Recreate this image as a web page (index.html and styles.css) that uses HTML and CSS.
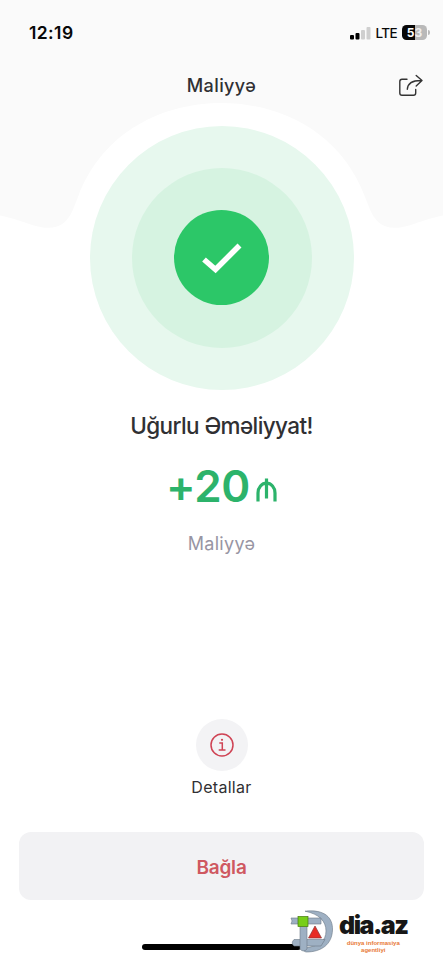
FILE: index.html
```html
<!DOCTYPE html>
<html lang="az">
<head>
<meta charset="utf-8">
<title>Maliyyə</title>
<link rel="stylesheet" href="styles.css">
</head>
<body>
<main class="screen">
  <svg class="backdrop" width="443" height="240" viewBox="0 0 443 240" aria-hidden="true">
    <path fill="#fafafa" d="M0 0H443V215.500C430 218 420 222 409 225.500C388 231.500 376 226 369 207L365 197C340 130 278 103 221.500 103S103 130 78 197L74 207C67 226 55 231.500 34 225.500C23 222 13 218 0 215.500Z"/>
  </svg>

  <div class="status">
    <span class="time">12:19</span>
    <div class="indicators">
      <svg class="signal" width="21" height="14" viewBox="0 0 21 14" aria-hidden="true">
        <rect x="0" y="9" width="4" height="4.500" rx="1"/>
        <rect x="5.500" y="7" width="4" height="6.500" rx="1"/>
        <rect x="11" y="4" width="4" height="9.500" rx="1" fill="#cfcfcf"/>
        <rect x="16.500" y="1" width="4" height="12.500" rx="1" fill="#cfcfcf"/>
      </svg>
      <span class="network">LTE</span>
      <span class="battery"><span class="level"><b>5</b><b>3</b></span><i class="cap"></i></span>
    </div>
  </div>

  <header class="header">
    <h1 class="title">Maliyyə</h1>
    <svg class="share" width="26" height="24" viewBox="0 0 26 24" fill="none" stroke="#333" stroke-width="1.400" stroke-linecap="round" stroke-linejoin="round">
      <path d="M9 5.300H4Q1.800 5.300 1.800 7.500V19Q1.800 21.200 4 21.200H15.500Q17.700 21.200 17.700 19V15.500"/>
      <path d="M9.300 15.200C9.700 9.500 13.500 6.300 23.600 6.500M18.200 1.500L24 6.500L18.200 11.900"/>
    </svg>
  </header>

  <section class="result">
    <div class="ring-outer"><div class="ring-inner"><div class="disc">
      <svg width="40" height="32" viewBox="0 0 40 32" fill="none" stroke="#fff" stroke-width="5.600" stroke-linejoin="miter"><path d="M2 17.500L13.500 27.500L37.500 3.500"/></svg>
    </div></div></div>
    <h2 class="message">Uğurlu Əməliyyat!</h2>
    <div class="amount"><span class="sum">+20</span>
      <svg class="manat" width="21" height="24" viewBox="0 0 21 24" fill="none" stroke="#2cb36b" stroke-width="3.200"><path d="M2 23.500V15A8.500 9.800 0 0 1 19 15V23.500M10.500 .5V20.500"/></svg>
    </div>
    <p class="category">Maliyyə</p>
  </section>

  <section class="details">
    <div class="info">
      <svg width="26" height="26" viewBox="0 0 26 26" fill="none" stroke="#cf4354" stroke-width="1.500"><circle cx="13" cy="13" r="11"/><path d="M10.300 11.100H13.300V18M9.700 18H16.500"/><circle cx="13" cy="7.800" r="1.100" fill="#cf4354" stroke="none"/></svg>
    </div>
    <span class="details-label">Detallar</span>
  </section>

  <button class="close">Bağla</button>

  <footer class="footer">
    <div class="home"></div>
    <div class="watermark">
      <svg width="45" height="44" viewBox="0 0 45 44" aria-hidden="true">
        <g fill="#9eb0c3" stroke="#6c7986" stroke-width=".6">
          <path d="M15 1.200C35 -1 43 8 42.500 20C42 34 32 42 16 42Q12 41 15 38C29 36 36 31 36 21C36 11 29 4 15 1.200Z"/>
          <path d="M1 8H31V14H1Q3 11 1 8ZM4 29.500H35L31 36H4Q.500 33 4 29.500Z"/>
          <path d="M10 10H17V39Q13.500 43 10 39Z"/>
        </g>
        <rect x="8" y="6.500" width="10" height="10" fill="#77ce19" stroke="#45790c" stroke-width=".7"/>
        <path d="M25 16L31.500 28H18.500Z" fill="#e82c24" stroke="#86383a" stroke-width=".7"/>
      </svg>
      <div class="brand"><span class="brand-name">dia.az</span><span class="brand-line">dünya informasiya</span><span class="brand-line">agentliyi</span></div>
    </div>
  </footer>
</main>
</body>
</html>
```
FILE: styles.css
```css
* { box-sizing: border-box; }
body { margin: 0; background: #fff; font-family: Inter, "Noto Sans", sans-serif; color: #303033; }
h1, h2, p { margin: 0; }
svg { display: block; flex: none; }
.screen { position: relative; width: 443px; height: 960px; display: flex; flex-direction: column; align-items: center; overflow: hidden; }
.screen > * { flex: none; }
.backdrop { position: absolute; top: 0; left: 0; z-index: -1; }

.status { width: 100%; height: 64px; padding: 1px 13px 0 29px; display: flex; align-items: center; justify-content: space-between; color: #080808; }
.time { font-size: 17.500px; font-weight: 600; letter-spacing: .4px; }
.indicators { display: flex; align-items: center; }
.network { margin-left: 4px; font-size: 13.500px; font-weight: 500; letter-spacing: -.6px; }
.battery { display: flex; align-items: center; gap: 1px; margin-left: 5px; }
.level { width: 25px; height: 15px; border-radius: 4.500px; display: flex; align-items: center; justify-content: center; background: linear-gradient(90deg, #080808 53%, #b9b9b9 53%); color: #fff; font-size: 12px; line-height: 15px; }
.level b + b { color: #eee; }
.cap { width: 2px; height: 5px; border-radius: 0 2px 2px 0; background: #bbb; }

.header { width: 100%; height: 43px; padding: 0 19px 0 45px; display: flex; align-items: center; }
.title { flex: 1; text-align: center; font-size: 18px; font-weight: 500; letter-spacing: .4px; }

.result { margin-top: 18.500px; display: flex; flex-direction: column; align-items: center; }
.ring-outer, .ring-inner, .disc { display: flex; align-items: center; justify-content: center; border-radius: 50%; }
.ring-outer { width: 264px; height: 264px; background: #e7f8ee; }
.ring-inner { width: 180px; height: 180px; background: #d6f3e1; }
.disc { width: 95px; height: 95px; background: #2cc768; }
.message { margin-top: 20.500px; height: 32px; line-height: 32px; font-size: 22.500px; font-weight: 500; letter-spacing: -.6px; white-space: nowrap; }
.amount { height: 56px; margin-top: 16px; display: flex; align-items: flex-end; gap: 6px; color: #2cb36b; }
.sum { font-size: 44px; line-height: 56px; font-weight: 600; letter-spacing: -.3px; }
.manat { margin-bottom: 12px; }
.category { margin-top: 16px; height: 28px; line-height: 28px; font-size: 18px; color: #9895a3; letter-spacing: .3px; }

.details { margin-top: 161px; display: flex; flex-direction: column; align-items: center; }
.info { width: 52px; height: 52px; border-radius: 50%; background: #f3f3f5; display: flex; align-items: center; justify-content: center; }
.details-label { margin-top: 4px; height: 24px; line-height: 24px; font-size: 16px; letter-spacing: .3px; }

.close { margin-top: 33px; width: 405px; height: 68px; border: 0; border-radius: 12px; background: #f2f2f4; color: #cf5860; font: 600 19px Inter, sans-serif; letter-spacing: -.2px; padding: 2px 0 0; }

.footer { position: relative; width: 100%; flex: 1 !important; display: flex; justify-content: center; padding-top: 44px; }
.home { width: 159px; height: 6px; border-radius: 3px; background: #000; }
.watermark { position: absolute; left: 290px; top: 10px; display: flex; gap: 4px; }
.brand { display: flex; flex-direction: column; align-items: center; font-family: "Liberation Sans", sans-serif; font-weight: 700; }
.brand-name { font-family: Inter, sans-serif; font-weight: 900; font-size: 25px; line-height: 31px; height: 30px; letter-spacing: -1.500px; color: #171717; }
.brand-line { font-size: 6px; line-height: 6.500px; color: #e87935; }
```
